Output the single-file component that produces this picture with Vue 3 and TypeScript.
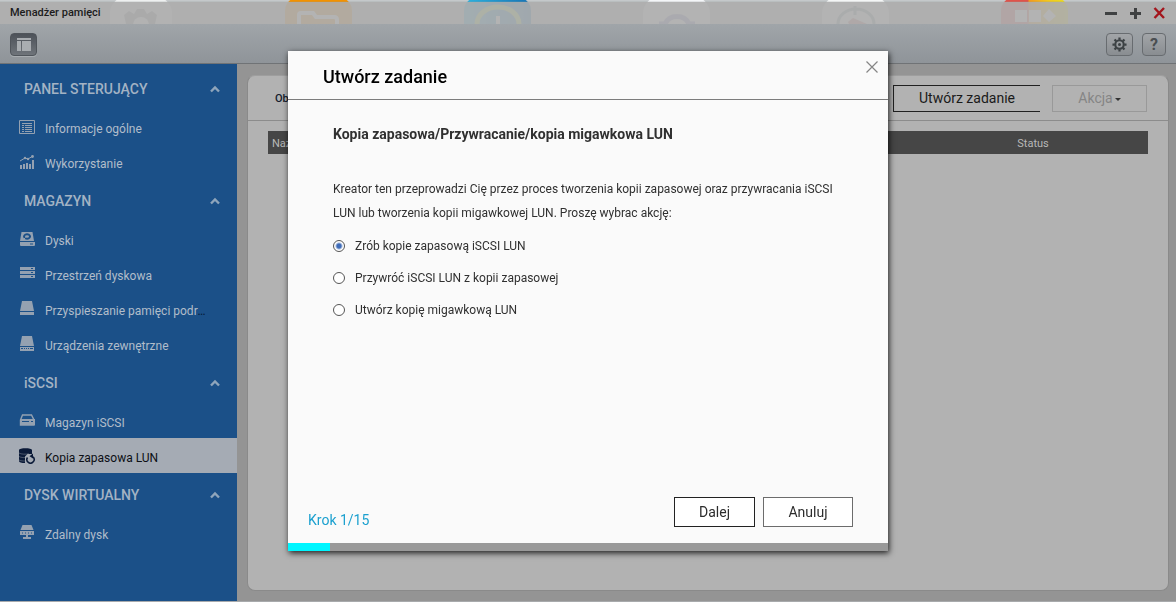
<script setup lang="ts">
import { ref, computed } from 'vue'

type IconName = 'info' | 'usage' | 'disk' | 'pool' | 'cache' | 'external' | 'iscsi' | 'backup' | 'remote'

interface Item {
  label: string
  icon: IconName
}

interface Section {
  title: string
  open: boolean
  items: Item[]
}

const sections = ref<Section[]>([
  {
    title: 'PANEL STERUJĄCY',
    open: true,
    items: [
      { label: 'Informacje ogólne', icon: 'info' },
      { label: 'Wykorzystanie', icon: 'usage' },
    ],
  },
  {
    title: 'MAGAZYN',
    open: true,
    items: [
      { label: 'Dyski', icon: 'disk' },
      { label: 'Przestrzeń dyskowa', icon: 'pool' },
      { label: 'Przyspieszanie pamięci podręcznej', icon: 'cache' },
      { label: 'Urządzenia zewnętrzne', icon: 'external' },
    ],
  },
  {
    title: 'iSCSI',
    open: true,
    items: [
      { label: 'Magazyn iSCSI', icon: 'iscsi' },
      { label: 'Kopia zapasowa LUN', icon: 'backup' },
    ],
  },
  {
    title: 'DYSK WIRTUALNY',
    open: true,
    items: [{ label: 'Zdalny dysk', icon: 'remote' }],
  },
])

const active = ref('Kopia zapasowa LUN')

const actions = [
  { value: 'backup', label: 'Zrób kopie zapasową iSCSI LUN' },
  { value: 'restore', label: 'Przywróć iSCSI LUN z kopii zapasowej' },
  { value: 'snapshot', label: 'Utwórz kopię migawkową LUN' },
]
const action = ref('backup')

const step = ref(1)
const steps = 15
const progress = computed(() => Math.ceil((step.value / steps) * 100))
</script>

<template>
  <div class="desktop">
    <svg class="wallpaper" viewBox="0 0 1176 24" preserveAspectRatio="xMidYMin slice" aria-hidden="true">
      <defs>
        <linearGradient id="blueTile"><stop offset="0" stop-color="#2cb4e0" /><stop offset="1" stop-color="#1672b4" /></linearGradient>
        <linearGradient id="mixTile">
          <stop offset="0" stop-color="#e0524a" /><stop offset=".4" stop-color="#e0524a" />
          <stop offset=".42" stop-color="#f49a1c" /><stop offset=".7" stop-color="#f4c81c" /><stop offset="1" stop-color="#e8e020" />
        </linearGradient>
      </defs>
      <rect width="1176" height="24" fill="#c4c8ca" />
      <rect x="110" y="-3" width="62" height="60" rx="16" fill="#eef0f0" />
      <path d="M124 15l5-4 5 3 3-5h7l3 5 5-3 5 4-2 9h-29z" fill="#8a8f92" />
      <circle cx="141" cy="25" r="8" fill="#eef0f0" />
      <rect x="285" y="-3" width="67" height="60" rx="14" fill="#f39200" />
      <path d="M299 24v-9q0-2 2-2h12l3 4h18q3 0 3 3v4" fill="none" stroke="#fff" stroke-width="4" />
      <rect x="464" y="-3" width="67" height="60" rx="14" fill="url(#blueTile)" />
      <path d="M477 24a21 17 0 0 1 42 0" fill="none" stroke="#b6dc58" stroke-width="5" />
      <path d="M498 16v8" stroke="#fff" stroke-width="4" />
      <rect x="643" y="-3" width="67" height="60" rx="16" fill="#f4f6f8" />
      <path d="M659 24h6a13 12 0 0 1 24 0h6" fill="none" stroke="#8f8fc8" stroke-width="5" />
      <rect x="822" y="-3" width="67" height="60" rx="16" fill="#f4f6f6" />
      <path d="M838 24a18 15 0 0 1 36 0M855 6v9" fill="none" stroke="#8aa0aa" stroke-width="3" />
      <path d="M848 22l5-4 14 6h-18z" fill="#c77" />
      <rect x="1001" y="-3" width="67" height="60" rx="14" fill="url(#mixTile)" />
      <path d="M1015 10h12v12h-12zM1029 10h12v12h-12zM1049 9l7 7-7 6-6-6z" fill="#fff" />
    </svg>

    <div class="window">
      <header class="titlebar">
        <h1>Menadżer pamięci</h1>
        <div class="winctl">
          <button type="button" aria-label="Minimalizuj">
            <svg width="12" height="12" viewBox="0 0 12 12"><path d="M0 6.500h12" stroke="#3f4142" stroke-width="3" /></svg>
          </button>
          <button type="button" aria-label="Maksymalizuj">
            <svg width="12" height="12" viewBox="0 0 12 12"><path d="M1 6.500h11M6.500 1v11" stroke="#3f4142" stroke-width="3" /></svg>
          </button>
          <button type="button" aria-label="Zamknij okno">
            <svg width="12" height="12" viewBox="0 0 12 12"><path d="M1.500 1l9.500 10M11 1L1.500 11" stroke="#a3151c" stroke-width="2.400" /></svg>
          </button>
        </div>
      </header>

      <div class="toolbar">
        <button type="button" class="panelbtn" aria-label="Panel boczny">
          <svg width="14" height="13" viewBox="0 0 14 13"><path d="M0 0h14v2H0zM0 3h4v10H0zM5 3h9v10H5z" fill="#a9adb1" /></svg>
        </button>
        <div class="tools">
          <button type="button" class="tool wide" aria-label="Ustawienia">
            <svg width="15" height="15" viewBox="0 0 16 16" fill="none" stroke="#3c4144">
              <circle cx="8" cy="8" r="4.500" stroke-width="2.200" />
              <circle cx="8" cy="8" r="1.600" fill="#3c4144" stroke="none" />
              <path d="M8 .5v2.500M8 13v2.500M.5 8h2.500M13 8h2.500M2.700 2.700l1.700 1.700M11.600 11.600l1.700 1.700M13.300 2.700l-1.700 1.700M4.400 11.600l-1.700 1.700" stroke-width="2.400" />
            </svg>
          </button>
          <button type="button" class="tool" aria-label="Pomoc">?</button>
        </div>
      </div>

      <div class="body">
        <nav class="sidebar">
          <section v-for="s in sections" :key="s.title">
            <h2>
              <button type="button" :aria-expanded="s.open" @click="s.open = !s.open">
                <span>{{ s.title }}</span>
                <svg :class="{ flip: !s.open }" width="10" height="8" viewBox="0 0 10 8"><path d="M1 6.500L5 2.500l4 4" fill="none" stroke="#8fa5bb" stroke-width="2.400" /></svg>
              </button>
            </h2>
            <ul v-if="s.open">
              <li v-for="item in s.items" :key="item.label">
                <button type="button" class="item" :class="{ active: active === item.label }" @click="active = item.label">
                  <svg class="icon" width="18" height="16" viewBox="0 0 18 16" fill="currentColor">
                    <template v-if="item.icon === 'info'">
                      <path d="M1.500 1.500h15v13h-15z" fill="none" stroke="currentColor" />
                      <path d="M4 4h10v1H4zM4 6h2v1H4zM7 6h7v1H7zM4 8h2v1H4zM7 8h7v1H7zM4 10h2v1H4zM7 10h7v1H7zM4 12h2v1H4zM7 12h7v1H7z" />
                    </template>
                    <template v-else-if="item.icon === 'usage'">
                      <path d="M2 11h2v4H2zM5 10h2v5H5zM8 9h2v6H8zM11 10h2v5h-2zM14 6h2v9h-2z" />
                      <path d="M2 7l5-3 3 1 5-3" fill="none" stroke="currentColor" />
                      <circle cx="7" cy="4" r="1.200" /><circle cx="10" cy="5" r="1.200" /><circle cx="14.500" cy="2.500" r="1.400" />
                    </template>
                    <template v-else-if="item.icon === 'disk'">
                      <path fill-rule="evenodd" d="M3.500 1h11L16 10H2zM9 2.300a4 3.200 0 1 0 .1 0z" />
                      <ellipse cx="9" cy="5.500" rx="2" ry="1.200" /><path d="M7.500 6.500l-3 3" stroke="currentColor" />
                      <path fill-rule="evenodd" d="M2 11h15v3q0 1-1 1H3q-1 0-1-1zM12 12.500v1h3v-1z" />
                    </template>
                    <path v-else-if="item.icon === 'pool'" fill-rule="evenodd" d="M2 1h15v3H2zM2 5h15v3H2zM2 9h15v3H2zM13 2v1h2V2zM13 6v1h2V6zM13 10v1h2v-1z" />
                    <path v-else-if="item.icon === 'cache'" d="M4 0h10l2 10H2zM2 11h14v3H2z" />
                    <path v-else-if="item.icon === 'external'" fill-rule="evenodd" d="M4 0h10l2 10H2zM2 11h14v4H2zM3 12v1h2v-1zM6 12v1h1v-1zM8 12v1h1v-1zM10 12v1h1v-1zM12 12v1h3v-1z" />
                    <template v-else-if="item.icon === 'iscsi'">
                      <path d="M2.500 7L4.500 2h9l2.500 5v5H2.500z" fill="none" stroke="currentColor" stroke-width="1.400" />
                      <path fill-rule="evenodd" d="M2 6h15v6H2zM4 8v1h7V8zM13 8v1h2V8z" />
                    </template>
                    <template v-else-if="item.icon === 'backup'">
                      <path d="M1 2C1-.4 14-.4 14 2v4H9.500L7 8.500V15c-3.500 0-6-.6-6-2z" />
                      <path d="M1 5c2 1.400 7 1.400 10 .8M1 8.500c2 1 4 1.200 6 1M1 12c2 1 4 1 6 1" fill="none" stroke="#a5abb4" stroke-width=".4" />
                      <path d="M9.500 9.500a3.600 3.600 0 1 0 5.500 -.6" fill="none" stroke="currentColor" stroke-width="1.500" />
                      <path d="M11.500 8.200l3.500-2.700v5z" />
                    </template>
                    <template v-else>
                      <path d="M4.500 0h9l2 5h-13z" />
                      <path fill-rule="evenodd" d="M2 6h14v4H2zM4 7.500v1h1v-1zM7 7.500v1h1v-1zM10 7.500v1h1v-1zM13 7.500v1h1v-1z" />
                      <path d="M8 10h2v2h3v2H5v-2h3z" />
                    </template>
                  </svg>
                  <span class="label"><span class="text">{{ item.label }}</span></span>
                </button>
              </li>
            </ul>
          </section>
        </nav>

        <main class="content">
          <div class="card">
            <div class="cardbar">
              <span class="caption">Obecne zadania</span>
              <button type="button" class="create">Utwórz zadanie</button>
              <button type="button" class="act" disabled>Akcja<i class="caret"></i></button>
            </div>
            <table>
              <thead>
                <tr>
                  <th class="name">Nazwa</th>
                  <th class="status">Status</th>
                </tr>
              </thead>
            </table>
          </div>
        </main>
      </div>
    </div>

    <div class="overlay">
      <form class="dialog" role="dialog" aria-modal="true" aria-labelledby="dlg-title" @submit.prevent>
        <div class="dlg-head">
          <h2 id="dlg-title">Utwórz zadanie</h2>
          <button type="button" class="close" aria-label="Zamknij">
            <svg width="12" height="12" viewBox="0 0 12 12"><path d="M.5.5l11 11M11.500.5l-11 11" stroke="#858585" stroke-width="1.200" /></svg>
          </button>
        </div>
        <div class="dlg-body">
          <h3>Kopia zapasowa/Przywracanie/kopia migawkowa LUN</h3>
          <p>Kreator ten przeprowadzi Cię przez proces tworzenia kopii zapasowej oraz przywracania iSCSI LUN lub tworzenia kopii migawkowej LUN. Proszę wybrac akcję:</p>
          <label v-for="a in actions" :key="a.value" class="choice">
            <input v-model="action" type="radio" name="action" :value="a.value" />
            <span>{{ a.label }}</span>
          </label>
        </div>
        <div class="dlg-foot">
          <span class="step">Krok {{ step }}/{{ steps }}</span>
          <div class="buttons">
            <button type="submit" class="next">Dalej</button>
            <button type="button" class="cancel">Anuluj</button>
          </div>
        </div>
        <div class="track" role="progressbar" aria-label="Postęp" :aria-valuenow="progress" aria-valuemin="0" aria-valuemax="100">
          <div class="fill" :style="{ width: progress + '%' }"></div>
        </div>
      </form>
    </div>
  </div>
</template>

<style>
body {
  margin: 0;
}
</style>

<style scoped>
.desktop {
  position: relative;
  min-height: 100vh;
  box-sizing: border-box;
  padding: 1px 0;
  display: flex;
  flex-direction: column;
  background: #a8aaac;
  font-family: Roboto, "Liberation Sans", sans-serif;
  font-size: 12px;
  color: #1c1c1c;
}
.desktop * {
  box-sizing: border-box;
}
h1, h2, h3, p, ul {
  margin: 0;
  padding: 0;
  list-style: none;
}
button {
  font: inherit;
  color: inherit;
  background: none;
  border: 0;
  padding: 0;
  margin: 0;
}
.wallpaper {
  position: absolute;
  top: 0;
  left: 0;
  width: 100%;
  height: 24px;
}
.window {
  position: relative;
  flex: 1;
  display: flex;
  flex-direction: column;
}
.titlebar {
  height: 23px;
  display: flex;
  align-items: center;
  justify-content: space-between;
  padding: 0 11px 0 10px;
  background: rgba(173, 173, 173, 0.92);
  background-clip: padding-box;
  border-top: 1px solid rgba(146, 150, 152, 0.2);
}
.titlebar h1 {
  font-size: 11px;
  font-weight: 500;
  line-height: 20px;
}
.winctl {
  display: flex;
  gap: 12px;
}
.winctl button {
  width: 12px;
  height: 12px;
  display: flex;
}
.toolbar {
  height: 40px;
  display: flex;
  align-items: center;
  justify-content: space-between;
  padding: 2px 10px 0;
  background: linear-gradient(#a0a5a9, #8f9499);
  border-bottom: 1px solid #707376;
}
.panelbtn {
  width: 27px;
  height: 23px;
  border-radius: 4px;
  border: 1px solid #50555b;
  background: linear-gradient(#4d5259, #6f747a);
  box-shadow: 0 1px 0 #a9adb1;
  display: flex;
  align-items: center;
  justify-content: center;
}
.tools {
  display: flex;
  gap: 9px;
}
.tool {
  width: 24px;
  height: 23px;
  border: 1px solid #686c70;
  border-radius: 4px;
  background: linear-gradient(#a2a5a8, #898d91);
  display: flex;
  align-items: center;
  justify-content: center;
  font-size: 16px;
  font-weight: 700;
  color: #4a4e51;
}
.wide {
  width: 27px;
}
.body {
  flex: 1;
  display: flex;
}
.sidebar {
  width: 237px;
  flex: none;
  padding-top: 3px;
  background: #1b5088;
}
.sidebar h2 button {
  width: 100%;
  height: 42px;
  display: flex;
  align-items: center;
  justify-content: space-between;
  padding: 2px 17px 0 24px;
  font-size: 14px;
  font-weight: 500;
  line-height: 16px;
  color: #a3b3c4;
}
.flip {
  transform: rotate(180deg);
}
.item {
  width: 100%;
  height: 35px;
  display: flex;
  align-items: center;
  gap: 9px;
  padding-left: 18px;
  text-align: left;
  font-size: 12px;
  color: #94a1b1;
}
.icon {
  flex: none;
}
.label {
  width: 163px;
  padding-top: 4px;
  line-height: 18px;
  overflow: hidden;
  white-space: nowrap;
  text-overflow: ellipsis;
  color: #061c38;
}
.text {
  color: #b1bdca;
}
.active {
  background: #a5abb4;
  color: #0b1a38;
}
.active .text {
  color: #0c0f14;
}
.content {
  flex: 1;
  min-width: 0;
  display: flex;
  padding: 11px 7px 10px 10px;
  background: #949494;
}
.card {
  flex: 1;
  min-width: 0;
  background: #b2b2b2;
  border: 1px solid #8a8a8a;
  border-top-color: #9e9e9e;
  border-radius: 8px;
}
.cardbar {
  height: 45px;
  display: flex;
  align-items: center;
  padding: 0 21px 0 27px;
  border-bottom: 1px solid #8c8c8c;
}
.caption {
  flex: 1;
  font-size: 11px;
  font-weight: 500;
  color: #141c2c;
}
.create {
  width: 147px;
  height: 27px;
  border: 1px solid #202020;
  border-right: 0;
  font-size: 14px;
  color: #1a1a1a;
}
.act {
  width: 95px;
  height: 27px;
  margin-left: 12px;
  border: 1px solid #999;
  font-size: 14px;
  color: #858585;
}
.caret {
  display: inline-block;
  vertical-align: middle;
  margin-left: 2px;
  border: 3px solid transparent;
  border-top-color: #333;
  border-bottom: 0;
}
table {
  width: calc(100% - 40px);
  margin: 10px 20px 0;
  border-collapse: collapse;
  table-layout: fixed;
}
th {
  height: 23px;
  padding: 1px 4px 0;
  background: #464646;
  color: #b8b8b8;
  font-size: 11px;
  font-weight: 400;
}
.name {
  text-align: left;
}
.status {
  width: 230px;
}
.overlay {
  position: fixed;
  inset: 0;
  display: flex;
  align-items: center;
  justify-content: center;
}
.dialog {
  width: 600px;
  max-width: 100%;
  min-height: 500px;
  display: flex;
  flex-direction: column;
  background: #fafafa;
  box-shadow: 1px 2px 6px rgba(0, 0, 0, 0.85);
}
.dlg-head {
  height: 49px;
  display: flex;
  justify-content: space-between;
  padding: 0 10px 0 35px;
  border-bottom: 1px solid #7c7c7c;
}
.dlg-head h2 {
  font-size: 18px;
  font-weight: 500;
  line-height: 52px;
  color: #000;
}
.close {
  width: 12px;
  height: 12px;
  margin-top: 10px;
  display: flex;
}
.dlg-body {
  flex: 1;
  padding: 24px 45px 0;
  color: #303030;
}
.dlg-body h3 {
  font-size: 14px;
  font-weight: 700;
  line-height: 20px;
  margin-bottom: 33px;
}
.dlg-body p {
  font-size: 12px;
  line-height: 24px;
  margin-bottom: 5px;
}
.choice {
  display: flex;
  align-items: center;
  gap: 10px;
  height: 32px;
  line-height: 16px;
}
.choice input {
  appearance: none;
  flex: none;
  width: 12px;
  height: 12px;
  margin: 0;
  border: 1px solid #555;
  border-radius: 50%;
  background: #fff;
}
.choice input:checked {
  background: radial-gradient(circle, #3f6cb8 0 2px, #fff 4px);
}
.dlg-foot {
  display: flex;
  align-items: flex-start;
  justify-content: space-between;
  padding: 0 35px 14px 20px;
}
.step {
  padding-top: 16px;
  font-size: 14px;
  line-height: 18px;
  color: #1ba0cf;
}
.buttons {
  display: flex;
  gap: 8px;
  padding-top: 2px;
}
.next, .cancel {
  width: 81px;
  height: 30px;
  border: 1px solid #222;
  background: #fff;
  font-size: 14px;
  color: #2c2c2c;
}
.cancel {
  width: 90px;
  border-color: #6c6c6c;
}
.track {
  height: 8px;
  background: #999;
}
.fill {
  height: 8px;
  background: #00f6ff;
}
</style>
